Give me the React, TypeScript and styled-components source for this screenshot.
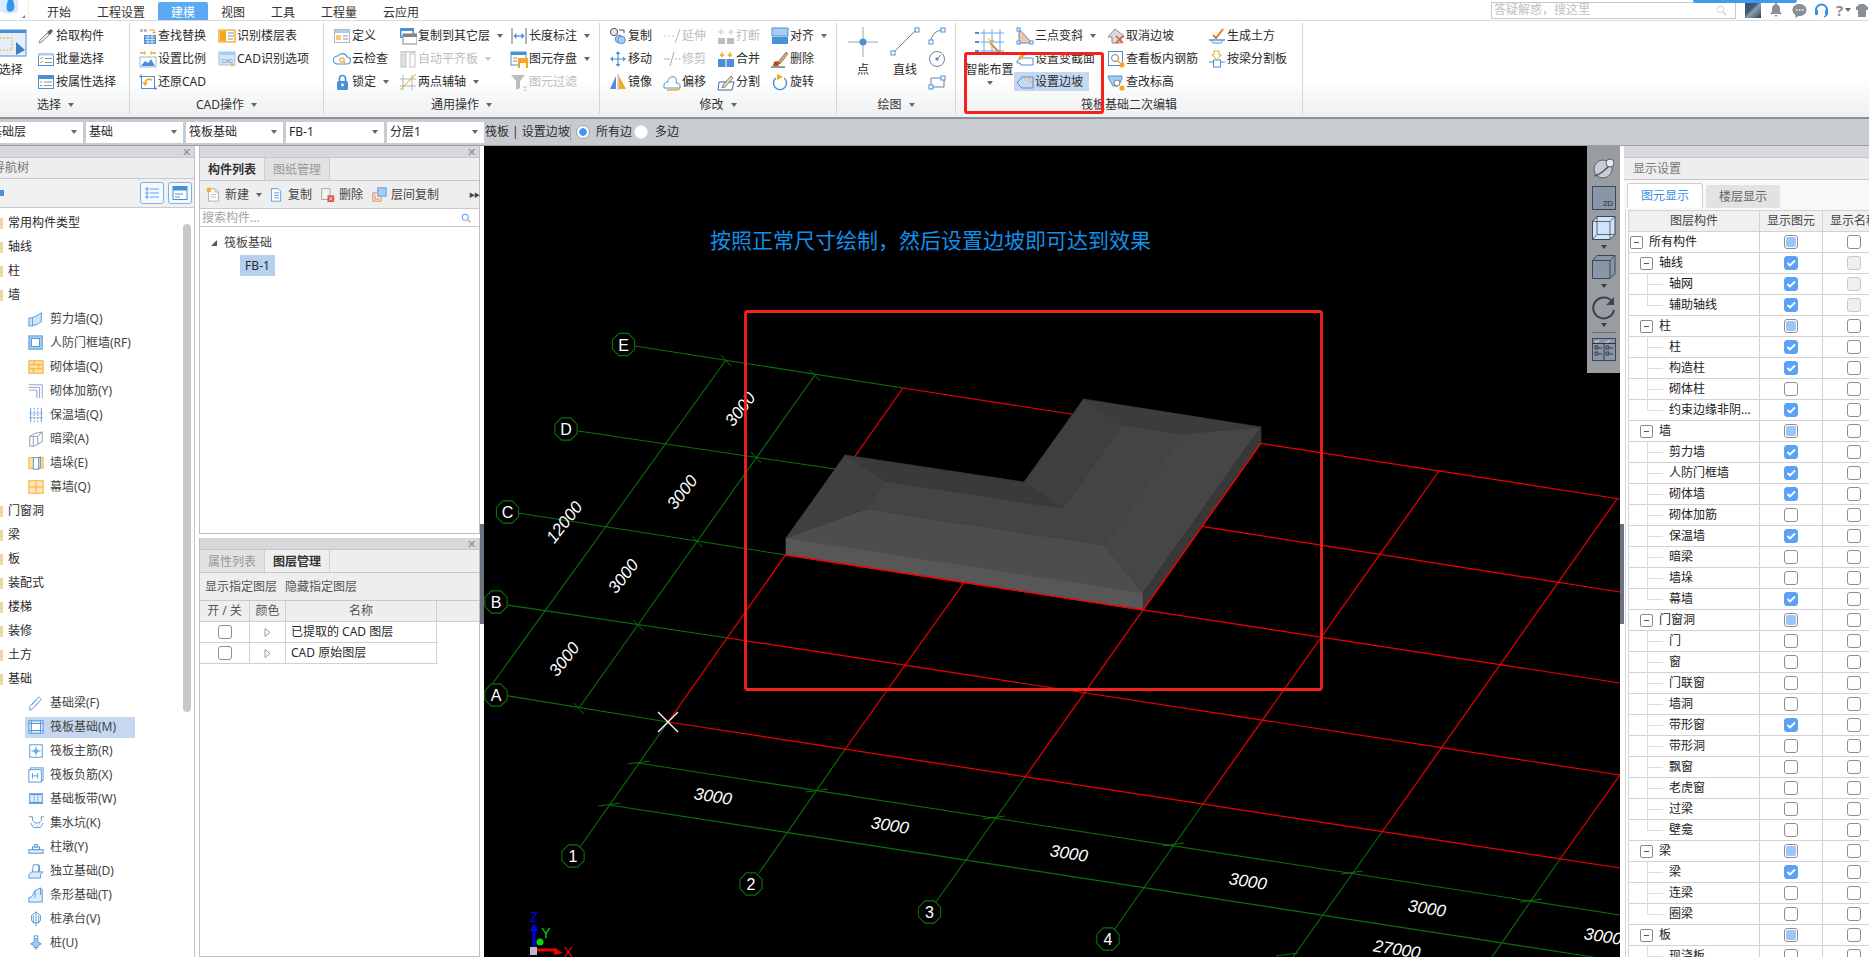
import React from "react";
import styled, { createGlobalStyle } from "styled-components";

const B = "#4a90d9";
const LB = "#a9cdf2";
const O = "#f5a623";
const G = "#8b8f94";
const FONT = `"Noto Sans", "Noto Sans CJK SC", "Liberation Sans", sans-serif`;

const Global = createGlobalStyle`
  html, body { margin: 0; padding: 0; background: #fff; overflow: hidden; }
  * { box-sizing: border-box; }
  body { font-family: ${FONT}; font-size: 12px; color: #2b2b2b; }
`;

const Root = styled.div`
  position: relative;
  width: 1869px;
  height: 957px;
  overflow: hidden;
  display: flex;
  flex-direction: column;
  line-height: 16px;
`;

/* ---------- top bar ---------- */
const TopBar = styled.div`
  height: 21px;
  display: flex;
  align-items: stretch;
  border-bottom: 1px solid #d9dbde;
  background: #fff;
  flex-shrink: 0;
`;
const LogoBox = styled.div`
  width: 29px;
  height: 21px;
  margin-right: 5px;
  position: relative;
  border-right: 1px solid #eceef0;
  flex-shrink: 0;
`;
const Tab = styled.div<{ $active?: boolean }>`
  padding: 3px 13px 0;
  margin-top: 2px;
  height: 18px;
  line-height: 15px;
  white-space: nowrap;
  color: ${(p) => (p.$active ? "#fff" : "#333")};
  background: ${(p) => (p.$active ? "#5aa9f5" : "transparent")};
  border-radius: ${(p) => (p.$active ? "2px 2px 0 0" : "0")};
`;
const TopRight = styled.div`
  margin-left: auto;
  display: flex;
  align-items: center;
  height: 20px;
  width: 378px;
  flex-shrink: 0;
`;
const SearchBox = styled.div`
  width: 245px;
  height: 17px;
  border: 1px solid #c9c9c9;
  display: flex;
  align-items: center;
  justify-content: space-between;
  padding: 0 8px 0 2px;
  color: #c0c0c0;
  margin-right: 9px;
  flex-shrink: 0;
`;
const Avatar = styled.div`
  width: 16px;
  height: 16px;
  background: linear-gradient(135deg, #3b5a78 40%, #8fa0ab 55%, #2b3f52);
  margin-right: 8px;
  flex-shrink: 0;
`;
const TopIcon = styled.div<{ $w: number }>`
  width: ${(p) => p.$w}px;
  display: flex;
  align-items: center;
  color: #8a8f94;
  font-size: 15px;
  font-weight: 700;
  flex-shrink: 0;
`;
const Capsule = styled.div`
  position: absolute;
  left: 1693px;
  top: 0;
  width: 104px;
  height: 3px;
  background: #3d9bf0;
  border-radius: 0 0 4px 4px;
`;

/* ---------- ribbon ---------- */
const Ribbon = styled.div`
  height: 98px;
  display: flex;
  padding: 2px 0 3px;
  background: linear-gradient(#fff 60%, #eef0f1);
  border-bottom: 2px solid #8d9196;
  flex-shrink: 0;
`;
const Group = styled.div<{ $w: number }>`
  width: ${(p) => p.$w}px;
  flex-shrink: 0;
  display: flex;
  flex-direction: column;
  border-right: 1px solid #d4d6d8;
`;
const GroupBody = styled.div<{ $pl: number }>`
  display: flex;
  height: 70px;
  padding: 1px 0 0 ${(p) => p.$pl}px;
`;
const GroupLabel = styled.div<{ $pr?: number }>`
  margin-top: 2px;
  height: 21px;
  display: flex;
  align-items: center;
  justify-content: center;
  padding-right: ${(p) => p.$pr ?? 0}px;
  color: #333;
`;
const Col = styled.div<{ $w: number }>`
  width: ${(p) => p.$w}px;
  flex-shrink: 0;
  display: flex;
  flex-direction: column;
  align-items: flex-start;
`;
const Item = styled.div<{ $off?: boolean; $sel?: boolean }>`
  height: ${(p) => (p.$sel ? "19px" : "23px")};
  margin: ${(p) => (p.$sel ? "2px 0 2px -2px" : "0")};
  padding: ${(p) => (p.$sel ? "0 6px 0 2px" : "0")};
  display: flex;
  align-items: center;
  white-space: nowrap;
  color: ${(p) => (p.$off ? "#bdbdbd" : "#2b2b2b")};
  background: ${(p) => (p.$sel ? "#c5d8ef" : "transparent")};
`;
const Slot = styled.span`
  width: 18px;
  height: 18px;
  margin-right: 1px;
  display: flex;
  align-items: center;
  justify-content: center;
  flex-shrink: 0;
`;
const Caret = styled.i<{ $off?: boolean; $ml?: number }>`
  display: inline-block;
  flex-shrink: 0;
  margin-left: ${(p) => p.$ml ?? 7}px;
  border-left: 3.5px solid transparent;
  border-right: 3.5px solid transparent;
  border-top: 4px solid ${(p) => (p.$off ? "#c9c9c9" : "#666")};
`;
const Big = styled.div<{ $w: number; $pl?: number }>`
  width: ${(p) => p.$w}px;
  padding-left: ${(p) => p.$pl ?? 0}px;
  flex-shrink: 0;
  display: flex;
  flex-direction: column;
  align-items: center;
  padding-top: 3px;
`;
const BigIcon = styled.div<{ $w: number }>`
  width: ${(p) => p.$w}px;
  height: 32px;
  display: flex;
  align-items: flex-start;
  justify-content: center;
`;
const BigLabel = styled.div`
  margin-top: 3px;
  white-space: nowrap;
  height: 16px;
`;
const BigCaret = styled.div`
  margin-top: 3px;
  display: flex;
  margin-left: -7px;
`;
const RibbonMark = styled.div`
  position: absolute;
  left: 964px;
  top: 52px;
  width: 140px;
  height: 62px;
  border: 3px solid #f5211c;
  border-radius: 3px;
`;

/* ---------- selector bar ---------- */
const SelectBar = styled.div`
  height: 27px;
  background: #c8cbcf;
  display: flex;
  align-items: center;
  gap: 3px;
  border-bottom: 1px solid #9a9da1;
  flex-shrink: 0;
`;
const Drop = styled.div<{ $w: number; $ml?: number }>`
  width: ${(p) => p.$w}px;
  margin-left: ${(p) => p.$ml ?? 0}px;
  height: 21px;
  background: #fff;
  display: flex;
  align-items: center;
  justify-content: space-between;
  padding: 0 6px 0 3px;
  flex-shrink: 0;
`;
const BarText = styled.span<{ $ml?: number; $w?: number }>`
  margin-left: ${(p) => p.$ml ?? 0}px;
  white-space: nowrap;
  ${(p) => (p.$w ? `width: ${p.$w}px;` : "")}
`;
const BarSep = styled.i`
  width: 1px;
  height: 17px;
  background: #a5a8ac;
`;
const Radio = styled.span<{ $on?: boolean; $ml?: number }>`
  width: 14px;
  height: 14px;
  border-radius: 50%;
  margin-left: ${(p) => p.$ml ?? 0}px;
  background: ${(p) => (p.$on ? "radial-gradient(circle, #3f97f5 0 3.5px, #fff 4px)" : "#fff")};
  border: 1px solid ${(p) => (p.$on ? "#9aa0a6" : "#e8e8e8")};
  flex-shrink: 0;
`;

/* ---------- main ---------- */
const Main = styled.div`
  flex: 1;
  display: flex;
  min-height: 0;
`;
const LeftPanel = styled.div`
  width: 195px;
  flex-shrink: 0;
  display: flex;
  flex-direction: column;
  border-right: 1px solid #c3c5c8;
  position: relative;
  overflow: hidden;
`;
const TitleStrip = styled.div`
  height: 12px;
  background: #d6d8db;
  flex-shrink: 0;
  display: flex;
  justify-content: flex-end;
  align-items: center;
  padding-right: 3px;
  color: #8a8a8a;
  font-size: 11px;
  font-family: "Liberation Sans", sans-serif;
  border-bottom: 1px solid #c6c8ca;
`;
const PanelHead = styled.div`
  height: 21px;
  background: #eeeeee;
  color: #777;
  font-size: 12px;
  border-bottom: 1px solid #c9c9c9;
  flex-shrink: 0;
  display: flex;
  align-items: center;
`;
const ClippedTitle = styled.span`
  margin-left: -31px;
  white-space: nowrap;
`;
const NavTools = styled.div`
  height: 29px;
  background: #f0f0f0;
  border-bottom: 1px solid #c9c9c9;
  display: flex;
  align-items: center;
  flex-shrink: 0;
  padding-right: 2px;
`;
const Pin = styled.div`
  width: 4px;
  height: 6px;
  background: ${B};
  margin-right: auto;
`;
const ViewBtn = styled.div`
  width: 24px;
  height: 22px;
  border: 1px solid #7ab3ec;
  border-radius: 3px;
  background: #f5f9fd;
  margin-left: 4px;
  display: flex;
  align-items: center;
  justify-content: center;
`;
const Tree = styled.div`
  flex: 1;
  background: #fff;
  padding-top: 3px;
  overflow: hidden;
`;
const TopRow = styled.div`
  height: 24px;
  display: flex;
  align-items: center;
`;
const FolderStub = styled.i`
  width: 2.5px;
  height: 11px;
  background: #f0d69f;
  margin-right: 5.5px;
`;
const ChildRow = styled.div`
  height: 24px;
  display: flex;
  align-items: center;
`;
const ChildInner = styled.div<{ $sel?: boolean }>`
  width: 110px;
  height: 21px;
  margin-left: 25px;
  padding-left: 3px;
  display: flex;
  align-items: center;
  background: ${(p) => (p.$sel ? "#c5d8ef" : "transparent")};
  white-space: nowrap;
  color: #444;
`;
const TreeIcon = styled.span`
  width: 16px;
  height: 16px;
  margin-right: 6px;
  display: flex;
  flex-shrink: 0;
`;
const ScrollThumb = styled.div`
  position: absolute;
  left: 183px;
  top: 78px;
  width: 8px;
  height: 488px;
  background: #c8c8c8;
  border-radius: 4px;
`;

const MidCol = styled.div`
  width: 281px;
  margin-left: 4px;
  flex-shrink: 0;
  display: flex;
  flex-direction: column;
  gap: 4px;
`;
const MidPanel = styled.div<{ $h?: number }>`
  height: ${(p) => (p.$h ? `${p.$h}px` : "auto")};
  flex: ${(p) => (p.$h ? "none" : "1")};
  border: 1px solid #bcbec1;
  border-top: 0;
  display: flex;
  flex-direction: column;
  background: #fff;
  min-height: 0;
`;
const PanelTabs = styled.div`
  height: 23px;
  display: flex;
  background: #eee;
  border-bottom: 1px solid #c9c9c9;
  flex-shrink: 0;
`;
const PanelTab = styled.div<{ $on?: boolean }>`
  width: 65px;
  padding-top: 1px;
  display: flex;
  align-items: center;
  justify-content: center;
  font-size: 12px;
  font-weight: ${(p) => (p.$on ? 700 : 400)};
  color: ${(p) => (p.$on ? "#333" : "#999")};
  background: ${(p) => (p.$on ? "#eee" : "#e2e2e2")};
  border-right: 1px solid #cfcfcf;
`;
const MidTools = styled.div`
  height: 27px;
  background: #eee;
  display: flex;
  align-items: center;
  flex-shrink: 0;
  padding: 1px 0 0 6px;
  color: #444;
`;
const ToolBtn = styled.div<{ $w: number }>`
  width: ${(p) => p.$w}px;
  display: flex;
  align-items: center;
  flex-shrink: 0;
  white-space: nowrap;
`;
const ToolIcon = styled.span`
  width: 15px;
  height: 16px;
  margin-right: 4px;
  display: flex;
`;
const More = styled.span`
  margin-left: 29px;
  color: #444;
  font-size: 6px;
  letter-spacing: -1px;
`;
const SearchRow = styled.div`
  height: 19px;
  display: flex;
  align-items: center;
  justify-content: space-between;
  padding: 1px 7px 0 2px;
  color: #a5a5a5;
  border-bottom: 1px solid #c9c9c9;
  border-top: 1px solid #c9c9c9;
  flex-shrink: 0;
`;
const ComponentTree = styled.div`
  padding: 7px 0 0 11px;
`;
const TreeHead = styled.div`
  display: flex;
  align-items: center;
  height: 18px;
  color: #444;
`;
const TreeTri = styled.i`
  width: 0;
  height: 0;
  border-left: 6px solid transparent;
  border-bottom: 6px solid #555;
  margin-right: 7px;
`;
const CompChip = styled.div`
  margin: 3px 0 0 29px;
  width: 35px;
  height: 21px;
  background: #b5cfee;
  display: flex;
  align-items: center;
  justify-content: center;
`;
const LayerTools = styled.div`
  height: 28px;
  background: #eee;
  border-bottom: 1px solid #c9c9c9;
  display: flex;
  align-items: center;
  gap: 8px;
  padding: 1px 0 0 5px;
  color: #555;
  flex-shrink: 0;
`;
const LayerHeadRow = styled.div`
  height: 21px;
  display: flex;
  background: #eee;
  border-bottom: 1px solid #d0d0d0;
  flex-shrink: 0;
  color: #555;
`;
const LayerRow = styled.div`
  height: 21px;
  width: 238px;
  display: flex;
  border-bottom: 1px solid #d0d0d0;
  flex-shrink: 0;
`;
const LayerCell = styled.div<{ $w: number; $left?: boolean }>`
  width: ${(p) => p.$w}px;
  flex-shrink: 0;
  display: flex;
  align-items: center;
  justify-content: ${(p) => (p.$left ? "flex-start" : "center")};
  padding-left: ${(p) => (p.$left ? "5px" : "0")};
  border-right: 1px solid #d0d0d0;
  white-space: nowrap;
`;

/* ---------- canvas ---------- */
const CanvasWrap = styled.div`
  width: 1140px;
  padding-left: 4px;
  flex-shrink: 0;
  position: relative;
  background: #fff;
`;
const Handle = styled.div<{ $left: number }>`
  position: absolute;
  left: ${(p) => p.$left}px;
  top: 378px;
  width: 4px;
  height: 100px;
  background: #6b7280;
`;
const CanvasSvg = styled.svg`
  display: block;
  background: #000;
`;
const DimText = styled.text`
  fill: #fff;
  font-family: "Liberation Sans", sans-serif;
  font-size: 17px;
  font-style: italic;
  text-anchor: middle;
`;
const BubbleText = styled.text`
  fill: #fff;
  font-family: "Liberation Sans", sans-serif;
  font-size: 16px;
  text-anchor: middle;
`;
const NoteText = styled.text`
  fill: #1190ea;
  font-family: "Noto Sans CJK SC", sans-serif;
  font-size: 21px;
`;
const GizmoText = styled.text`
  font-family: "Liberation Sans", sans-serif;
  font-size: 14px;
  text-anchor: middle;
`;
const ToolStrip = styled.div`
  position: absolute;
  left: 1107px;
  top: 0;
  width: 33px;
  height: 227px;
  padding-top: 9px;
  background: #999ca0;
  display: flex;
  flex-direction: column;
  align-items: center;
`;
const StripSlot = styled.div<{ $mt: number }>`
  margin-top: ${(p) => p.$mt}px;
  display: flex;
`;
const StripSep = styled.i`
  width: 24px;
  height: 1px;
  background: #6d7075;
  margin-top: 5px;
`;
const StripCaret = styled.i<{ $mt: number }>`
  margin-top: ${(p) => p.$mt}px;
  border-left: 3.5px solid transparent;
  border-right: 3.5px solid transparent;
  border-top: 4px solid #3a3f48;
`;

/* ---------- right panel ---------- */
const RightPanel = styled.div`
  width: 249px;
  flex-shrink: 0;
  padding-left: 5px;
  position: relative;
  overflow: hidden;
  display: flex;
  flex-direction: column;
  background: #fff;
`;
const RightTitleStrip = styled(TitleStrip)`
  background: #d8d9dc;
  margin-left: -1px;
`;
const RightHead = styled.div`
  height: 22px;
  background: #eeeeee;
  color: #777;
  font-size: 12px;
  padding-left: 9px;
  border-bottom: 1px solid #c9c9c9;
  display: flex;
  align-items: center;
  flex-shrink: 0;
  margin-left: -1px;
`;
const RightTabs = styled.div`
  height: 30px;
  padding: 3px 0 0 3px;
  display: flex;
  gap: 3px;
  background: #f8f8f8;
  flex-shrink: 0;
  margin-left: -1px;
  align-items: flex-start;
`;
const RightTab = styled.div<{ $on?: boolean }>`
  width: ${(p) => (p.$on ? 76 : 74)}px;
  height: ${(p) => (p.$on ? 25 : 23)}px;
  margin-top: ${(p) => (p.$on ? 0 : 2)}px;
  display: flex;
  align-items: center;
  justify-content: center;
  color: ${(p) => (p.$on ? "#3a8fe6" : "#666")};
  background: ${(p) => (p.$on ? "#fff" : "#e2e2e2")};
  border: ${(p) => (p.$on ? "1px solid #cfcfcf" : "0")};
  border-bottom: 0;
  border-radius: 3px 3px 0 0;
`;
const TableWrap = styled.div`
  border-left: 1px solid #d2d2d2;
  padding-left: 2px;
  flex: 1;
  min-height: 0;
`;
const TableRow = styled.div<{ $head?: boolean }>`
  height: ${(p) => (p.$head ? 22 : 21)}px;
  width: 300px;
  display: flex;
  background: ${(p) => (p.$head ? "#f0f0f0" : "#fff")};
  border-bottom: 1px solid #d2d2d2;
  border-top: ${(p) => (p.$head ? "1px solid #d2d2d2" : "0")};
  border-left: 1px solid #d2d2d2;
  flex-shrink: 0;
  color: ${(p) => (p.$head ? "#444" : "#222")};
`;
const NameCell = styled.div<{ $pl: number; $last?: boolean; $leaf?: boolean }>`
  width: 131px;
  flex-shrink: 0;
  position: relative;
  display: flex;
  align-items: center;
  padding-left: ${(p) => p.$pl}px;
  border-right: 1px solid #d2d2d2;
  white-space: nowrap;
  ${(p) =>
    p.$leaf
      ? `&::before { content: ""; position: absolute; left: 18px; top: 50%; width: 16px; height: 1px; background: #dcdcdc; }
         &::after { content: ""; position: absolute; left: 18px; top: -1px; width: 1px; bottom: ${p.$last ? "50%" : "-1px"}; background: #dcdcdc; }`
      : ""}
`;
const HeadCell = styled.div<{ $w: number }>`
  width: ${(p) => p.$w}px;
  flex-shrink: 0;
  display: flex;
  align-items: center;
  justify-content: center;
  border-right: 1px solid #d2d2d2;
`;
const CheckCell = styled.div`
  width: 63px;
  flex-shrink: 0;
  display: flex;
  align-items: center;
  justify-content: center;
  border-right: 1px solid #d2d2d2;
`;
const Expander = styled.span`
  width: 13px;
  height: 13px;
  border: 1px solid #8a8a8a;
  border-radius: 2px;
  background: #fff;
  margin-right: 6px;
  display: flex;
  align-items: center;
  justify-content: center;
  flex-shrink: 0;
  &::after {
    content: "";
    width: 5px;
    height: 1px;
    background: #555;
  }
`;
const Box = styled.span<{ $s: string }>`
  width: 14px;
  height: 14px;
  border-radius: 3px;
  display: flex;
  align-items: center;
  justify-content: center;
  border: 1px solid ${(p) => (p.$s === "c" ? "#5aa2f5" : p.$s === "d" ? "#c8c8c8" : "#8e8e8e")};
  background: ${(p) => (p.$s === "c" ? "#5aa2f5" : p.$s === "d" ? "#efefef" : "#fff")};
  flex-shrink: 0;
`;
const BoxFill = styled.i`
  width: 10px;
  height: 10px;
  border-radius: 2px;
  background: #9cc5fb;
`;
const Ic = styled.svg`
  display: block;
  flex-shrink: 0;
`;

/* ---------- icons ---------- */
const I: React.FC<{ s?: number; v?: number; vh?: number; children: React.ReactNode }> = ({ s = 18, v = 18, vh, children }) => (
  <Ic width={s} height={vh ? (s * vh) / v : s} viewBox={`0 0 ${v} ${vh ?? v}`} fill="none">
    {children}
  </Ic>
);

const ribbonIcons: Record<string, React.ReactNode> = {
  pick: (<><path d="M2 16l1-3 7-7 2 2-7 7z" fill="#e4e4e4" stroke="#8f959b" /><path d="M10 5l4-3 2 2-3 4z" fill="#5b5f64" /></>),
  batch: (<><rect x="1.5" y="3.5" width="15" height="12" fill="#fff" stroke={B} /><rect x="1" y="3" width="16" height="2.5" fill={LB} /><path d="M3 8l1 1 2-2M3 12l1 1 2-2" stroke={O} /><path d="M8 8.5h7M8 12.5h7" stroke={G} /></>),
  attr: (<><rect x="1.5" y="2.5" width="15" height="13" fill="#fff" stroke={B} /><rect x="1" y="2" width="16" height="4" fill={B} /><path d="M3 9h2M7 9h8M3 12.5h2M7 12.5h8" stroke={G} /></>),
  find: (<><rect x="1" y="2" width="3" height="3" fill="#bbb" /><rect x="5" y="2" width="3" height="3" fill="#bbb" /><path d="M10 3h5v3" stroke={O} strokeWidth="1.2" /><path d="M13 5l2 2 2-2" fill={O} /><rect x="5" y="8" width="12" height="9" fill={B} /><path d="M6 10h10M6 12.5h10M6 15h10M9 8v9M13 8v9" stroke="#fff" strokeWidth=".7" /></>),
  scale: (<><path d="M1 3h5M12 3h5" stroke={O} strokeWidth="1.4" /><path d="M6 1v4M12 1v4" stroke={O} /><rect x="1" y="7" width="16" height="10" fill="#fff" stroke="#9db7d4" /><path d="M2 16l4-5 3 2 3-4 4 7z" fill={B} /></>),
  restore: (<><rect x="2.5" y="3.5" width="13" height="12" fill="#fff" stroke={B} /><path d="M2 1v4M16 13v4M0 3.5h4M14 15.5h4" stroke={B} /><path d="M13 7c-4-2-7 0-7 4" stroke={O} strokeWidth="1.8" /><path d="M3 9l3 4 3-3z" fill={O} /></>),
  floor: (<><rect x="1" y="3" width="16" height="12" fill="#fff" stroke={O} strokeWidth="1.3" /><rect x="2" y="4" width="6" height="10" fill={O} /><path d="M10 6h6M10 9h6M10 12h5" stroke={G} /></>),
  cadopt: (<><rect x="1" y="2" width="16" height="13" fill="#d5e6f7" stroke="#9fc3e8" /><rect x="1" y="2" width="16" height="3" fill="#a9cdf2" /><text x="9" y="12.5" fontSize="5.5" fontFamily="Liberation Sans" fill="#5b8fc5" textAnchor="middle">CAD</text><path d="M13 12l4 3-4 2z" fill="#f0b66a" /></>),
  define: (<><rect x="1.5" y="2.5" width="15" height="13" fill="#fff" stroke="#b4b8bc" /><rect x="2" y="3" width="14" height="3" fill={LB} /><rect x="3" y="8" width="5" height="5" fill="#f7c978" /><path d="M10 9h5M10 12h5" stroke={G} /></>),
  cloud: (<><path d="M4 14h10a3 3 0 000-7 5 5 0 00-9-1 4 4 0 00-1 8z" fill="#fff" stroke={B} strokeWidth="1.1" /><circle cx="9" cy="10" r="2.2" stroke={O} strokeWidth="1.2" /><path d="M10.5 11.5l2 1.5" stroke={O} strokeWidth="1.2" /></>),
  lock: (<><rect x="4" y="8" width="11" height="9" rx="1.5" fill={B} /><path d="M6.5 8V5.5a3 3 0 016 0V8" stroke={B} strokeWidth="1.7" /><circle cx="9.5" cy="12" r="1.4" fill="#fff" /></>),
  copyto: (<><rect x="1" y="1" width="14" height="10" fill={B} /><rect x="2.5" y="4" width="11" height="5.5" fill="#fff" /><rect x="4" y="7" width="14" height="10" fill="#fff" stroke="#7e8489" /><rect x="4" y="7" width="14" height="3" fill="#7e8489" /></>),
  alignoff: (<><path d="M1 2h16" stroke="#c4c4c4" strokeWidth="1.5" /><rect x="2" y="4" width="5" height="13" fill="#e0e0e0" stroke="#c4c4c4" /><rect x="11" y="4" width="5" height="13" fill="#fff" stroke="#c4c4c4" /></>),
  twopt: (<><path d="M4 2v15M13 2v15M1 6h16M1 13h16" stroke="#b0b4b8" /><path d="M1 17L17 1" stroke={O} /></>),
  length: (<><path d="M2 1v16M16 1v16" stroke="#666" /><path d="M4 9h10" stroke={B} strokeWidth="1.3" /><path d="M3.5 9l3-3v6zM14.5 9l-3-3v6z" fill={B} /></>),
  store: (<><rect x="1" y="2" width="15" height="13" fill="#fff" stroke={B} /><rect x="1" y="2" width="15" height="3" fill={B} /><path d="M3 8h4M3 11h4" stroke={G} /><rect x="8" y="8" width="10" height="10" fill={O} /><rect x="10" y="13" width="6" height="5" fill="#fff" /></>),
  filter: (<><path d="M1 2h14l-5 6v7l-4 2V8z" fill="#bcbcbc" /><path d="M13 14h4M13 17h4" stroke="#c8c8c8" /></>),
  copy: (<><circle cx="5" cy="5" r="3.6" fill="#e8e8e8" stroke="#555" /><circle cx="10" cy="12" r="3.8" fill={LB} stroke={B} /><circle cx="12.5" cy="13" r="3.8" fill={LB} stroke={B} /><path d="M10 3h5v3" stroke="#555" /></>),
  extend: (<><path d="M1 9h2M5 9h2M9 9h2" stroke="#c4c4c4" strokeWidth="1.2" /><path d="M12 16l5-14" stroke="#b8b8b8" /></>),
  brk: (<><rect x="1" y="11" width="7" height="6" fill="#bdbdbd" /><rect x="10" y="11" width="7" height="6" fill="#bdbdbd" /><path d="M4 2v6M14 2v6M1 5h6M11 5h6" stroke="#c8c8c8" /></>),
  align: (<><rect x="1" y="1" width="16" height="8" fill={LB} stroke={B} /><rect x="1" y="10" width="16" height="7" fill={B} /></>),
  move: (<><path d="M9 1l2.5 3h-5zM9 17l2.5-3h-5zM1 9l3-2.5v5zM17 9l-3-2.5v5z" fill={B} /><path d="M9 4v10M4 9h10" stroke={B} strokeWidth="1.2" /></>),
  trim: (<><path d="M1 9h6M12 9h2M15.5 9h2" stroke="#b0b0b0" strokeWidth="1.2" /><path d="M7 16l4-14" stroke="#a8a8a8" /></>),
  merge: (<><path d="M5 1v5M3 3.5l2-2 2 2M13 1v5M11 3.5l2-2 2 2" stroke={O} strokeWidth="1.3" transform="rotate(180 9 4)" /><rect x="1" y="9" width="16" height="8" fill={B} /><path d="M9 9v8" stroke="#fff" /></>),
  del: (<><path d="M7 12L15 2l2 2-8 10z" fill="#c9a57a" stroke="#7a5a3a" strokeWidth=".6" /><path d="M3 12c2-1 4-1 6 1l-2 3H2z" fill="#b84a20" /><path d="M0 17h14" stroke="#333" /></>),
  mirror: (<><path d="M7 3v13H1z" fill={B} /><path d="M9 1v16" stroke="#aaa" /><path d="M10 3v13h7z" fill={O} /></>),
  offset: (<><path d="M1 15v-3c0-2 2-3 4-3 0-4 3-6 6-5 2 0 3 3 2 6 3 0 4 1 4 3v2z" fill="#fff" stroke={B} /><path d="M4 17h9c3 0 4-1 4-3" stroke={O} strokeWidth="1.3" /></>),
  split: (<><path d="M2 9h15l-2 8H1z" fill="#fff" stroke="#3f6aa5" /><path d="M6 12l8-9 2 2-8 9-3 1z" fill="#ecd9b3" stroke="#555" strokeWidth=".7" /></>),
  rotate: (<><path d="M5 5a6.5 6.5 0 108 0" stroke={B} strokeWidth="1.4" /><path d="M6 1l6 3-6 3z" fill={O} /></>),
  arc: (<><path d="M3 15C3 8 8 3 15 3" stroke="#6f8092" /><rect x="1" y="13" width="4" height="4" fill="#fff" stroke={B} /><rect x="13" y="1" width="4" height="4" fill="#fff" stroke={B} /></>),
  circle: (<><circle cx="9" cy="9" r="7.5" fill="#fff" stroke="#6f8092" /><path d="M9 9l4-4" stroke="#6f8092" /><rect x="7.5" y="7.5" width="3" height="3" fill={B} /></>),
  rect: (<><path d="M3 5h13v9H3z" stroke="#6f8092" /><rect x="1" y="12" width="4" height="4" fill="#fff" stroke={B} /><rect x="13" y="3" width="4" height="4" fill="#fff" stroke={B} /></>),
  tri3: (<><path d="M3 2v14h13z" fill="#f7c7a0" stroke={B} /><rect x="1" y="1" width="3" height="3" fill="#fff" stroke={B} /><rect x="1" y="14" width="3" height="3" fill="#fff" stroke={B} /><rect x="14" y="14" width="3" height="3" fill="#fff" stroke={B} /></>),
  secvar: (<><path d="M1 11l4-3h12v7H5l-1-2H1z" fill="#fff" stroke={B} /><path d="M2 8l6-6 2 2-6 6z" fill={O} /></>),
  slope: (<><path d="M1 10l5-6h11M6 15h11V4M1 10l5 5" stroke={B} /><path d="M8 6l2-2M11 8l3-3M14 10l2-2" stroke={O} /></>),
  cancel: (<><path d="M1 10l7-8 9 7v1h-3v6H5v-6z" fill="#d8d8d8" stroke="#8f8f8f" /><path d="M9 9l7 7M16 9l-7 7" stroke="#e2573b" strokeWidth="1.6" /></>),
  rebar: (<><rect x="1.5" y="1.5" width="14" height="14" fill="#fff" stroke={B} /><circle cx="8" cy="8" r="3.5" stroke="#6f8092" /><path d="M10 10l3 3" stroke={O} strokeWidth="1.5" /><circle cx="15" cy="15" r="2.6" fill={O} /></>),
  elev: (<><path d="M1 3h14v3l-4 7H6L2 6z" fill={LB} stroke={B} /><circle cx="10" cy="10" r="3" fill="#fff" stroke="#6f8092" /><circle cx="15" cy="15" r="2.6" fill={O} /></>),
  earth: (<><path d="M5 8l3 3 7-9" stroke="#e8792b" strokeWidth="2" /><path d="M1 13h16" stroke={B} strokeWidth="1.4" /><path d="M3 13l2 3h8l2-3" stroke={B} /></>),
  beam: (<><path d="M6 1h5v4h2.5L8.500 9.500 4 5h2z" fill="#fff" stroke={O} /><path d="M1 12h5M12 12h5" stroke={B} /><rect x="5.500" y="10" width="7" height="7" fill="#fff" stroke={B} /></>),
  newdoc: (<><path d="M3 2h8l4 4v11H3z" fill="#fafafa" stroke="#a8a8a8" /><path d="M11 2v4h4" stroke="#a8a8a8" /><rect x="1" y="1" width="5" height="5" fill={O} opacity=".9" /><path d="M6 9h6M6 12h6" stroke="#bbb" /></>),
  copyd: (<><path d="M3 2h8l3 3v12H3z" fill="#fff" stroke={B} /><path d="M6 7h6M6 10h6M6 13h6" stroke={B} /></>),
  deld: (<><path d="M2 2h10v13H2z" fill="#f4f4f4" stroke="#999" /><rect x="9" y="10" width="8" height="8" fill="#d9534f" /><path d="M11 12l4 4M15 12l-4 4" stroke="#fff" /></>),
  floorcopy: (<><rect x="7" y="1" width="10" height="10" fill={LB} stroke={B} /><path d="M1 17V7h5M1 17h10v-5M3.500 14.500V9M3.500 14.500H9" stroke="#e8792b" /></>),
  magnify: (<><circle cx="7" cy="7" r="5" stroke="#5aa2f5" strokeWidth="1.7" /><path d="M10.500 10.500l5 5" stroke="#e0a44a" strokeWidth="2" /></>),
  magg: (<><circle cx="8" cy="8" r="5" stroke="#c8c8c8" strokeWidth="1.3" /><path d="M11.500 11.500l5 5" stroke="#c8c8c8" strokeWidth="1.6" /></>),
};

const tIcons: Record<string, React.ReactNode> = {
  shear: (<><path d="M1 8c5 0 10-3 14-6v10c-4 3-9 5-14 5z" fill="#d3e4f6" stroke={B} /><path d="M5 8v9" stroke={B} /></>),
  civil: (<><rect x="1" y="1" width="15" height="15" fill={LB} stroke={B} /><rect x="4" y="4" width="9" height="9" fill="#fff" stroke={B} /></>),
  brick: (<><rect x="1" y="2" width="16" height="14" fill="#ffe1a6" stroke={O} /><path d="M1 6.500h16M1 11h16M7 2v4.500M12 6.500V11M6 11v5" stroke={O} /></>),
  rebar: (<><path d="M1 2h15v15M1 5h12v12M1 8h9v9" stroke="#7f9cbe" /></>),
  ins: (<><path d="M3 1v16M15 1v16" stroke={B} /><path d="M7 1v16M11 1v16" stroke={B} strokeDasharray="2 1.500" /><path d="M1 7h16M1 12h16" stroke={B} strokeWidth=".5" /></>),
  dark: (<><path d="M2 6l5-3 9-2v11l-9 5H2z" fill="#fff" stroke="#7f94ab" /><path d="M2 6h9l5-5M11 6v9M6 6v11" stroke="#7f94ab" /></>),
  pier: (<><rect x="1" y="3" width="16" height="12" fill="#ffe1a6" stroke={O} /><rect x="6" y="3" width="6" height="13" fill="#fff" stroke={B} /><path d="M12 3l2-1v12l-2 2" stroke={B} /></>),
  curtain: (<><rect x="1" y="2" width="16" height="14" fill="#ffe7b5" stroke={O} /><path d="M1 9h16M9 2v14" stroke={O} /></>),
  beam: (<><path d="M2 13L12 2l3 3L5 16l-3 1z" fill="#fff" stroke={B} /><path d="M5 11l6-6M7 13l6-6" stroke={B} strokeWidth=".6" /></>),
  raft: (<><rect x="1" y="2" width="16" height="14" fill="#dcebf9" stroke={B} /><rect x="4" y="5" width="10" height="8" fill="#fff" stroke={B} /><path d="M1 5h3M14 5h3M1 13h3M14 13h3M4 2v3M14 2v3M4 13v3M14 13v3" stroke={B} /></>),
  main: (<><rect x="2" y="2" width="14" height="14" fill="#fff" stroke={B} /><path d="M9 4v10M4 9h10" stroke={B} /><circle cx="9" cy="9" r="2" stroke={B} /></>),
  neg: (<><rect x="3" y="1" width="14" height="14" fill="#fff" stroke={B} /><rect x="1" y="3" width="14" height="14" fill="#fff" stroke={B} /><path d="M5 7v6M5 10h6M11 7v6" stroke={B} /></>),
  strip: (<><rect x="2" y="4" width="14" height="9" fill="#dcebf9" stroke={B} /><path d="M1 3h16M1 14h16" stroke={B} /><path d="M7 4v9M11 4v9" stroke={B} strokeDasharray="1.500 1" /></>),
  sump: (<><path d="M1 2h4v4l3 3h4l3-3V2h3M3 9l3 5h8l3-5" stroke={B} /><path d="M7 11h1M10 12h1M12 10h1" stroke="#999" /></>),
  cap: (<><rect x="1" y="12" width="16" height="4" fill="#dcebf9" stroke={B} /><rect x="5" y="9" width="8" height="3" fill="#fff" stroke={B} /><rect x="7.500" y="6" width="3" height="3" fill="#fff" stroke={B} /></>),
  ind: (<><path d="M1 13l3-3h13l-3 3v4H1z" fill="#dcebf9" stroke={B} /><path d="M5 10l1-8h6v8M12 2l1 1v7" stroke={B} /></>),
  stf: (<><path d="M1 17v-5l3-1 4-7 6-3 2 2v14z" fill="#dcebf9" stroke={B} /><path d="M8 4v8M14 1v8" stroke={B} /></>),
  pile: (<><path d="M9 1l5 4v6l-5 3-5-3V5z" fill="#fff" stroke={B} /><path d="M9 1v16M6 5v9M12 5v9" stroke={B} /></>),
  pi: (<><rect x="7" y="1" width="4" height="3" fill="#fff" stroke={B} /><path d="M7 4v4l-4 2 4 2v2h4v-2l4-2-4-2V4" fill={LB} stroke={B} /><path d="M9 14v3" stroke={B} /></>),
};

const Ri: React.FC<{ n: string; s?: number }> = ({ n, s }) => <I s={s}>{ribbonIcons[n]}</I>;

type It = { i?: string; t?: string; c?: boolean; off?: boolean; sel?: boolean };
const RItem: React.FC<It> = ({ i, t, c, off, sel }) => (
  <Item $off={off} $sel={sel}>
    <Slot>{i && <Ri n={i} />}</Slot>
    {t}
    {c && <Caret $off={off} />}
  </Item>
);
const Column: React.FC<{ w: number; items: It[] }> = ({ w, items }) => (
  <Col $w={w}>
    {items.map((x, i) => (
      <RItem key={i} {...x} />
    ))}
  </Col>
);

/* ---------- canvas data ---------- */
const RED = "#f00000";
const GREEN = "#0b700b";
const redLines = [
  [668, 722, 1620, 868], [728, 638, 1620, 775], [786, 555, 1620, 683], [835, 469, 1620, 592], [903, 388, 1620, 499],
  [668, 722, 903, 388], [846, 748, 1085, 413], [1025, 777, 1261, 443], [1203, 804, 1439, 471], [1382, 832, 1617, 499], [1560, 859, 1620, 775],
];
const greenLines = [
  [484, 692, 668, 722], [507, 605, 728, 638], [518, 513, 786, 555], [578, 431, 835, 469], [635, 346, 903, 388],
  [580, 847, 668, 722], [759, 873, 846, 748], [936, 902, 1025, 777], [1114, 930, 1203, 804], [1293, 957, 1382, 832], [1492, 957, 1560, 859],
  [493, 683, 726, 360], [579, 708, 815, 375], [638.5, 763, 1620, 915], [609.5, 805, 1593, 957],
];
const hTicks = [[638.5, 763], [817, 791], [994, 818], [1173, 845], [1352, 873], [1531, 901], [609.5, 805], [1287, 955]];
const vTicks = [[579, 708], [638.5, 625], [697, 541], [756, 457], [815, 375], [726, 360]];
const bubbles: [string, number, number][] = [
  ["E", 623.5, 344.5], ["D", 566, 429], ["C", 507.5, 512], ["B", 496, 602], ["A", 496, 695],
  ["1", 573, 856], ["2", 751, 884], ["3", 929.5, 912], ["4", 1108, 939],
];
const dims: [string, number, number, number][] = [
  ["3000", 740, 409, -52], ["3000", 682, 492, -52], ["3000", 623, 576, -52], ["3000", 564, 659, -52], ["12000", 564, 522, -52],
  ["3000", 713, 796, 9], ["3000", 890, 825, 9], ["3000", 1069, 853, 9], ["3000", 1248, 881, 9], ["3000", 1427, 908, 9], ["3000", 1603, 936, 9], ["27000", 1397, 949, 9],
];
const octagon = (x: number, y: number, r: number) =>
  Array.from({ length: 8 }, (_, i) => {
    const a = Math.PI / 8 + (i * Math.PI) / 4;
    return `${(x + r * Math.cos(a)).toFixed(1)},${(y + r * Math.sin(a)).toFixed(1)}`;
  }).join(" ");
const faces: [string, string][] = [
  ["786,538 866,509 1104,545 1143,593", "#4d4d4d"],
  ["866,509 884.500,481 1063,508 1122,425 1182,434 1104,545", "#444444"],
  ["1104,545 1182,434 1261,427 1143,593", "#464646"],
  ["845,455 1024,482 1063,508 884.500,481", "#3a3a3a"],
  ["845,455 884.500,481 866,509 786,538", "#404040"],
  ["1024,482 1083.500,399 1122,425 1063,508", "#3f3f3f"],
  ["1083.500,399 1261,427 1182,434 1122,425", "#3c3c3c"],
  ["786,538 1143,593 1143,610 786,555", "#575757"],
  ["1143,593 1261,427 1261,443 1143,610", "#383838"],
];

const navTop1 = ["常用构件类型", "轴线", "柱"];
const wall: [string, string][] = [
  ["shear", "剪力墙(Q)"], ["civil", "人防门框墙(RF)"], ["brick", "砌体墙(Q)"], ["rebar", "砌体加筋(Y)"],
  ["ins", "保温墙(Q)"], ["dark", "暗梁(A)"], ["pier", "墙垛(E)"], ["curtain", "幕墙(Q)"],
];
const navTop2 = ["门窗洞", "梁", "板", "装配式", "楼梯", "装修", "土方"];
const base: [string, string][] = [
  ["beam", "基础梁(F)"], ["raft", "筏板基础(M)"], ["main", "筏板主筋(R)"], ["neg", "筏板负筋(X)"], ["strip", "基础板带(W)"],
  ["sump", "集水坑(K)"], ["cap", "柱墩(Y)"], ["ind", "独立基础(D)"], ["stf", "条形基础(T)"], ["pile", "桩承台(V)"], ["pi", "桩(U)"],
];

type Row = [string, number, string, string, boolean?];
const rows: Row[] = [
  ["所有构件", 0, "p", "n"],
  ["轴线", 1, "c", "d"], ["轴网", 2, "c", "d"], ["辅助轴线", 2, "c", "d", true],
  ["柱", 1, "p", "n"], ["柱", 2, "c", "n"], ["构造柱", 2, "c", "n"], ["砌体柱", 2, "n", "n"], ["约束边缘非阴...", 2, "c", "n", true],
  ["墙", 1, "p", "n"], ["剪力墙", 2, "c", "n"], ["人防门框墙", 2, "c", "n"], ["砌体墙", 2, "c", "n"], ["砌体加筋", 2, "n", "n"],
  ["保温墙", 2, "c", "n"], ["暗梁", 2, "n", "n"], ["墙垛", 2, "n", "n"], ["幕墙", 2, "c", "n", true],
  ["门窗洞", 1, "p", "n"], ["门", 2, "n", "n"], ["窗", 2, "n", "n"], ["门联窗", 2, "n", "n"], ["墙洞", 2, "n", "n"],
  ["带形窗", 2, "c", "n"], ["带形洞", 2, "n", "n"], ["飘窗", 2, "n", "n"], ["老虎窗", 2, "n", "n"], ["过梁", 2, "n", "n"], ["壁龛", 2, "n", "n", true],
  ["梁", 1, "p", "n"], ["梁", 2, "c", "n"], ["连梁", 2, "n", "n"], ["圈梁", 2, "n", "n", true],
  ["板", 1, "p", "n"], ["现浇板", 2, "n", "n"],
];

const Check: React.FC<{ s: string }> = ({ s }) => (
  <Box $s={s}>
    {s === "c" && (
      <Ic width="10" height="10" viewBox="0 0 10 10" fill="none">
        <path d="M1.500 5l2.500 2.500 5-5" stroke="#fff" strokeWidth="1.800" />
      </Ic>
    )}
    {s === "p" && <BoxFill />}
  </Box>
);

const selects: [string, number, number?][] = [["基础层", 96, -13], ["基础", 97], ["筏板基础", 97], ["FB-1", 98], ["分层1", 97]];

export default function App() {
  return (
    <Root>
      <Global />
      <TopBar>
        <LogoBox>
          <I s={29} v={29} vh={21}>
            <path d="M0 0h18v11c-6 4-13 3-18 0z" fill="#d9eafa" />
            <path d="M8 0h5c1 4 2 6 1 9-1 3-6 4-7 1-1-3 0-7 1-10z" fill="#2f97ee" />
            <path d="M25 15v3h-3z" fill="#777" />
          </I>
        </LogoBox>
        {["开始", "工程设置", "建模", "视图", "工具", "工程量", "云应用"].map((t) => (
          <Tab key={t} $active={t === "建模"}>{t}</Tab>
        ))}
        <TopRight>
          <SearchBox>
            {"答疑解惑\uFF0C搜这里"}
            <Ri n="magg" s={12} />
          </SearchBox>
          <Avatar />
          <TopIcon $w={23}>
            <I s={14} v={14}><path d="M7 0a1 1 0 011 1.500c2 .5 3 2 3 4v3l2 2.500H1L3 8.500v-3c0-2 1-3.500 3-4A1 1 0 017 0zM5.500 12h3a1.500 1.500 0 01-3 0z" fill="#8a8f94" /></I>
          </TopIcon>
          <TopIcon $w={22}>
            <I s={15} v={15}><path d="M7.500 1c4 0 7 2.500 7 6s-3 6-7 6l-1 0-3 2v-3C1.500 11 .5 9 .5 7c0-3.500 3-6 7-6z" fill="#8a8f94" /><path d="M4 7h1.500M7 7h1.500M10 7h1.500" stroke="#fff" strokeWidth="1.500" /></I>
          </TopIcon>
          <TopIcon $w={22}>
            <I s={15} v={15}><path d="M2 9V7a5.500 5.500 0 0111 0v2" stroke="#2f8fea" strokeWidth="2" /><rect x="1" y="7" width="3" height="5" rx="1" fill="#2f8fea" /><rect x="11" y="7" width="3" height="5" rx="1" fill="#2f8fea" /><path d="M13 12l-3 2" stroke="#2f8fea" strokeWidth="1.500" /></I>
          </TopIcon>
          <TopIcon $w={19}>?<Caret $ml={2} /></TopIcon>
          <TopIcon $w={8}>
            <I s={14} v={14}><path d="M1 4l4-3h4l4 3v3h-2v7H3V7H1z" fill="#8a8f94" /></I>
          </TopIcon>
        </TopRight>
      </TopBar>
      <Capsule />

      <Ribbon>
        <Group $w={130}>
          <GroupBody $pl={0}>
            <Big $w={37}>
              <BigIcon $w={37}>
                <I s={37} v={37} vh={32}>
                  <rect x="-4" y="3" width="30" height="26" fill="#e6eefa" stroke="#4a90d9" />
                  <rect x="-4" y="3" width="30" height="3" fill="#4a90d9" />
                  <path d="M0 11h12v12H0" stroke="#f5a623" strokeDasharray="2 1.500" />
                  <path d="M16 15l9 8-9 5z" fill="#3d7fc4" />
                </I>
              </BigIcon>
              <BigLabel>选择&nbsp;&nbsp;&nbsp;&nbsp;&nbsp;</BigLabel>
            </Big>
            <Column w={90} items={[{ i: "pick", t: "拾取构件" }, { i: "batch", t: "批量选择" }, { i: "attr", t: "按属性选择" }]} />
          </GroupBody>
          <GroupLabel $pr={18}>选择<Caret /></GroupLabel>
        </Group>
        <Group $w={194}>
          <GroupBody $pl={9}>
            <Column w={79} items={[{ i: "find", t: "查找替换" }, { i: "scale", t: "设置比例" }, { i: "restore", t: "还原CAD" }]} />
            <Column w={100} items={[{ i: "floor", t: "识别楼层表" }, { i: "cadopt", t: "CAD识别选项" }]} />
          </GroupBody>
          <GroupLabel>CAD操作<Caret /></GroupLabel>
        </Group>
        <Group $w={276}>
          <GroupBody $pl={9}>
            <Column w={66} items={[{ i: "define", t: "定义" }, { i: "cloud", t: "云检查" }, { i: "lock", t: "锁定", c: true }]} />
            <Column w={111} items={[{ i: "copyto", t: "复制到其它层", c: true }, { i: "alignoff", t: "自动平齐板", c: true, off: true }, { i: "twopt", t: "两点辅轴", c: true }]} />
            <Column w={88} items={[{ i: "length", t: "长度标注", c: true }, { i: "store", t: "图元存盘", c: true }, { i: "filter", t: "图元过滤", off: true }]} />
          </GroupBody>
          <GroupLabel>通用操作<Caret /></GroupLabel>
        </Group>
        <Group $w={237}>
          <GroupBody $pl={9}>
            <Column w={54} items={[{ i: "copy", t: "复制" }, { i: "move", t: "移动" }, { i: "mirror", t: "镜像" }]} />
            <Column w={54} items={[{ i: "extend", t: "延伸", off: true }, { i: "trim", t: "修剪", off: true }, { i: "offset", t: "偏移" }]} />
            <Column w={54} items={[{ i: "brk", t: "打断", off: true }, { i: "merge", t: "合并" }, { i: "split", t: "分割" }]} />
            <Column w={60} items={[{ i: "align", t: "对齐", c: true }, { i: "del", t: "删除" }, { i: "rotate", t: "旋转" }]} />
          </GroupBody>
          <GroupLabel>修改<Caret /></GroupLabel>
        </Group>
        <Group $w={119}>
          <GroupBody $pl={11}>
            <Big $w={30}>
              <BigIcon $w={30}>
                <I s={30} v={30}>
                  <path d="M15 0v30M0 15h30" stroke="#9aa4ae" />
                  <circle cx="15" cy="15" r="3.500" fill="#4a90d9" />
                </I>
              </BigIcon>
              <BigLabel>点</BigLabel>
            </Big>
            <Big $w={50} $pl={4}>
              <BigIcon $w={30}>
                <I s={30} v={30}>
                  <path d="M3 26L26 3" stroke="#6f8092" />
                  <rect x="1" y="24" width="4" height="4" fill="#fff" stroke="#4a90d9" />
                  <rect x="25" y="1" width="4" height="4" fill="#fff" stroke="#4a90d9" />
                </I>
              </BigIcon>
              <BigLabel>直线</BigLabel>
            </Big>
            <Column w={20} items={[{ i: "arc" }, { i: "circle" }, { i: "rect" }]} />
          </GroupBody>
          <GroupLabel>绘图<Caret /></GroupLabel>
        </Group>
        <Group $w={347}>
          <GroupBody $pl={7}>
            <Big $w={53}>
              <BigIcon $w={30}>
                <I s={30} v={30}>
                  <path d="M9 2v24M17 2v24M25 2v24M5 6h24M5 15h24M5 24h24" stroke="#6aa7e6" />
                  <path d="M0 6h4M0 15h4M0 24h4" stroke="#4a90d9" strokeWidth="2" />
                  <path d="M15 16l11 11" stroke="#c98a3c" strokeWidth="1.800" />
                  <path d="M13 11l2 3 4-1-3 3 1 3" stroke="#f5a623" />
                </I>
              </BigIcon>
              <BigLabel>智能布置</BigLabel>
              <BigCaret><Caret /></BigCaret>
            </Big>
            <Column w={91} items={[{ i: "tri3", t: "三点变斜", c: true }, { i: "secvar", t: "设置变截面" }, { i: "slope", t: "设置边坡", sel: true }]} />
            <Column w={101} items={[{ i: "cancel", t: "取消边坡" }, { i: "rebar", t: "查看板内钢筋" }, { i: "elev", t: "查改标高" }]} />
            <Column w={90} items={[{ i: "earth", t: "生成土方" }, { i: "beam", t: "按梁分割板" }]} />
          </GroupBody>
          <GroupLabel>筏板基础二次编辑</GroupLabel>
        </Group>
      </Ribbon>
      <RibbonMark />

      <SelectBar>
        {selects.map(([t, w, ml]) => (
          <Drop key={t} $w={w} $ml={ml}>
            {t}
            <Caret $ml={0} />
          </Drop>
        ))}
        <BarText $ml={-2} $w={82}>筏板 | 设置边坡</BarText>
        <BarSep />
        <Radio $on $ml={2} />
        <BarText $ml={3}>所有边</BarText>
        <Radio $ml={-1} />
        <BarText $ml={4}>多边</BarText>
      </SelectBar>

      <Main>
        <LeftPanel>
          <TitleStrip>✕</TitleStrip>
          <PanelHead><ClippedTitle>模块导航树</ClippedTitle></PanelHead>
          <NavTools>
            <Pin />
            <ViewBtn>
              <I s={16} v={16}><path d="M2 3h2v2H2zM2 7h2v2H2zM2 11h2v2H2z" stroke="#5aa2f5" /><path d="M6 4h9M6 8h9M6 12h9" stroke="#5aa2f5" /></I>
            </ViewBtn>
            <ViewBtn>
              <I s={16} v={16}><rect x="1" y="1.500" width="14" height="13" fill="#fff" stroke="#4a90d9" /><rect x="1" y="1.500" width="14" height="4" fill="#4a90d9" /><path d="M3 9h8M3 12h5" stroke="#4a90d9" /></I>
            </ViewBtn>
          </NavTools>
          <Tree>
            {navTop1.map((t) => <TopRow key={t}><FolderStub />{t}</TopRow>)}
            <TopRow><FolderStub />墙</TopRow>
            {wall.map(([ic, t]) => (
              <ChildRow key={t}><ChildInner><TreeIcon><I s={16}>{tIcons[ic]}</I></TreeIcon>{t}</ChildInner></ChildRow>
            ))}
            {navTop2.map((t) => <TopRow key={t}><FolderStub />{t}</TopRow>)}
            <TopRow><FolderStub />基础</TopRow>
            {base.map(([ic, t]) => (
              <ChildRow key={t}><ChildInner $sel={ic === "raft"}><TreeIcon><I s={16}>{tIcons[ic]}</I></TreeIcon>{t}</ChildInner></ChildRow>
            ))}
          </Tree>
          <ScrollThumb />
        </LeftPanel>

        <MidCol>
          <MidPanel $h={388}>
            <TitleStrip>✕</TitleStrip>
            <PanelTabs>
              <PanelTab $on>构件列表</PanelTab>
              <PanelTab>图纸管理</PanelTab>
            </PanelTabs>
            <MidTools>
              <ToolBtn $w={63}><ToolIcon><I s={15}>{ribbonIcons.newdoc}</I></ToolIcon>新建<Caret /></ToolBtn>
              <ToolBtn $w={51}><ToolIcon><I s={15}>{ribbonIcons.copyd}</I></ToolIcon>复制</ToolBtn>
              <ToolBtn $w={52}><ToolIcon><I s={15}>{ribbonIcons.deld}</I></ToolIcon>删除</ToolBtn>
              <ToolBtn $w={68}><ToolIcon><I s={15}>{ribbonIcons.floorcopy}</I></ToolIcon>层间复制</ToolBtn>
              <More>▶▶</More>
            </MidTools>
            <SearchRow>
              搜索构件...
              <Ri n="magnify" s={11} />
            </SearchRow>
            <ComponentTree>
              <TreeHead><TreeTri />筏板基础</TreeHead>
              <CompChip>FB-1</CompChip>
            </ComponentTree>
          </MidPanel>
          <MidPanel>
            <TitleStrip>✕</TitleStrip>
            <PanelTabs>
              <PanelTab>属性列表</PanelTab>
              <PanelTab $on>图层管理</PanelTab>
            </PanelTabs>
            <LayerTools><span>显示指定图层</span><span>隐藏指定图层</span></LayerTools>
            <LayerHeadRow>
              <LayerCell $w={50}>开 / 关</LayerCell>
              <LayerCell $w={36}>颜色</LayerCell>
              <LayerCell $w={151}>名称</LayerCell>
            </LayerHeadRow>
            {["已提取的 CAD 图层", "CAD 原始图层"].map((t) => (
              <LayerRow key={t}>
                <LayerCell $w={50}><Box $s="n" /></LayerCell>
                <LayerCell $w={36}>
                  <I s={9} v={9}><path d="M2 .5l5 4-5 4z" stroke="#9a9a9a" fill="#fff" /></I>
                </LayerCell>
                <LayerCell $w={151} $left>{t}</LayerCell>
              </LayerRow>
            ))}
          </MidPanel>
        </MidCol>

        <CanvasWrap>
          <Handle $left={0} />
          <CanvasSvg width="1136" height="811" viewBox="484 146 1136 811">
            {greenLines.map((l, i) => <line key={i} x1={l[0]} y1={l[1]} x2={l[2]} y2={l[3]} stroke={GREEN} strokeWidth="1.100" />)}
            {hTicks.map(([x, y], i) => <line key={i} x1={x - 11} y1={y + 1} x2={x + 11} y2={y - 2} stroke={GREEN} />)}
            {vTicks.map(([x, y], i) => <line key={i} x1={x - 5} y1={y - 5} x2={x + 5} y2={y + 6} stroke={GREEN} />)}
            {redLines.map((l, i) => <line key={i} x1={l[0]} y1={l[1]} x2={l[2]} y2={l[3]} stroke={RED} strokeWidth="1.200" />)}
            {faces.map(([p, c]) => <polygon key={p} points={p} fill={c} stroke={c} strokeWidth=".6" />)}
            <line x1="786" y1="555" x2="1143" y2="610" stroke={RED} strokeWidth="1.300" />
            <line x1="1143" y1="610" x2="1261" y2="443" stroke={RED} strokeWidth="1.300" />
            {bubbles.map(([t, x, y]) => (
              <g key={t}>
                <polygon points={octagon(x, y, 12)} fill="#000" stroke={GREEN} strokeWidth="1.100" />
                <BubbleText x={x} y={y + 6}>{t}</BubbleText>
              </g>
            ))}
            {dims.map(([t, x, y, r], i) => (
              <DimText key={i} x={x} y={y} dy="6" transform={`rotate(${r} ${x} ${y})`}>{t}</DimText>
            ))}
            <path d="M658 712l20 20M678 712l-20 20" stroke="#fff" strokeWidth="1.300" />
            <NoteText x="710" y="248">{"按照正常尺寸绘制\uFF0C然后设置边坡即可达到效果"}</NoteText>
            <rect x="745.500" y="311.500" width="576" height="378" rx="2" fill="none" stroke="#f5211c" strokeWidth="2.800" />
            <path d="M534 948v-20" stroke="#0000ee" strokeWidth="3" />
            <path d="M534 923l-4 8h8z" fill="#0000ee" />
            <GizmoText x="534" y="922" fill="#0000ee">Z</GizmoText>
            <circle cx="540" cy="942" r="3.500" fill="#08d908" />
            <GizmoText x="546" y="938" fill="#08d908">Y</GizmoText>
            <path d="M537 950h20" stroke="#ee0000" strokeWidth="3" />
            <path d="M563 953l-9-5v7z" fill="#ee0000" />
            <rect x="530" y="947" width="7" height="8" fill="#bbb" />
            <GizmoText x="568" y="957" fill="#ee0000">X</GizmoText>
          </CanvasSvg>
          <ToolStrip>
            <I s={26} v={26}>
              <circle cx="12" cy="14" r="9" fill="#c7cbd3" stroke="#5a6270" />
              <path d="M3 21c6-1 14-8 19-15" stroke="#4a5260" strokeWidth="1.500" />
              <circle cx="19" cy="8" r="4" fill="#e6e8ed" stroke="#5a6270" />
            </I>
            <StripSlot $mt={5}>
              <I s={24} v={24}>
                <rect x="0.500" y="0.500" width="23" height="23" fill="#8a96a8" stroke="#3c4656" />
                <text x="16" y="20" fontSize="8" fontFamily="Liberation Sans" fill="#1f2630" textAnchor="middle">2D</text>
              </I>
            </StripSlot>
            <StripSlot $mt={6}>
              <I s={24} v={24}>
                <path d="M.5 5.500L5 .5h18v18l-5 5H.5z" fill="#cfe4fb" stroke="#3c4656" />
                <path d="M.5 5.500H18v18M18 5.500L23 .5M5 .5v18h18M5 18.500l-4.500 5" stroke="#3c4656" strokeWidth=".8" />
              </I>
            </StripSlot>
            <StripCaret $mt={5} />
            <StripSlot $mt={6}>
              <I s={24} v={24}>
                <path d="M.5 5.500L5 .5h18v18l-5 5H.5z" fill="#8a96a8" stroke="#3c4656" />
                <path d="M.5 5.500H18v18M18 5.500L23 .5" stroke="#3c4656" />
              </I>
            </StripSlot>
            <StripCaret $mt={5} />
            <StripSlot $mt={6}>
              <I s={26} v={26}>
                <path d="M22 9A10.500 10.500 0 1023 16" stroke="#3a4350" strokeWidth="2" />
                <path d="M23 3v8h-8z" fill="#3a4350" />
              </I>
            </StripSlot>
            <StripCaret $mt={3} />
            <StripSep />
            <StripSlot $mt={4}>
              <I s={24} v={24}>
                <rect x=".5" y="1.500" width="23" height="22" fill="#8a96a8" stroke="#3c4656" />
                <path d="M3 4l1.500 1.500L7 3M14 4l1.500 1.500L18 3" stroke="#e8ecf0" />
                <path d="M.5 6.500h23M12 6.500v17M3 9h3v3H3zM3 15h3v3H3zM14 9h3v3h-3zM14 15h3v3h-3z M7 11h3M7 17h3M18 11h3M18 17h3" stroke="#2f3742" />
              </I>
            </StripSlot>
          </ToolStrip>
        </CanvasWrap>

        <RightPanel>
          <Handle $left={0} />
          <RightTitleStrip />
          <RightHead>显示设置</RightHead>
          <RightTabs>
            <RightTab $on>图元显示</RightTab>
            <RightTab>楼层显示</RightTab>
          </RightTabs>
          <TableWrap>
            <TableRow $head>
              <HeadCell $w={131}>图层构件</HeadCell>
              <HeadCell $w={63}>显示图元</HeadCell>
              <HeadCell $w={63}>显示名称</HeadCell>
            </TableRow>
            {rows.map(([t, lv, a, b, last], i) => (
              <TableRow key={i}>
                <NameCell $pl={lv === 0 ? 1 : lv === 1 ? 11 : 40} $leaf={lv === 2} $last={last}>
                  {lv < 2 && <Expander />}
                  {t}
                </NameCell>
                <CheckCell><Check s={a} /></CheckCell>
                <CheckCell><Check s={b} /></CheckCell>
              </TableRow>
            ))}
          </TableWrap>
        </RightPanel>
      </Main>
    </Root>
  );
}
